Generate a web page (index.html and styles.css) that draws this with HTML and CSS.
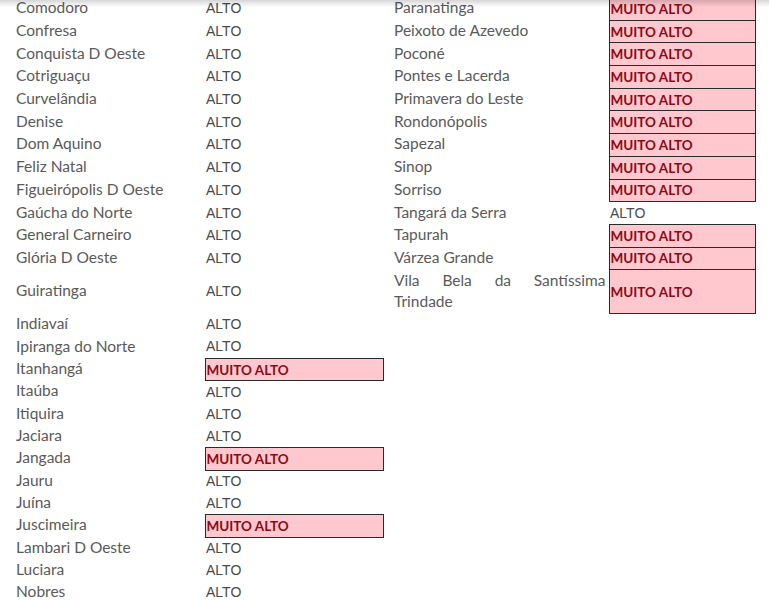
FILE: index.html
```html
<!DOCTYPE html>
<html lang="pt-BR">
<head>
<meta charset="utf-8">
<title>Municípios</title>
<link rel="stylesheet" href="styles.css">
</head>
<body>
<div class="shade"></div>
<table class="grid">
<colgroup><col class="w1"><col class="w2"><col class="w3"><col class="w4"></colgroup>
<tbody class="upper">
<tr><td class="name">Comodoro</td><td class="val">ALTO</td><td class="name r">Paranatinga</td><td class="val hi">MUITO ALTO</td></tr>
<tr><td class="name">Confresa</td><td class="val">ALTO</td><td class="name r">Peixoto de Azevedo</td><td class="val hi">MUITO ALTO</td></tr>
<tr><td class="name">Conquista D Oeste</td><td class="val">ALTO</td><td class="name r">Poconé</td><td class="val hi">MUITO ALTO</td></tr>
<tr><td class="name">Cotriguaçu</td><td class="val">ALTO</td><td class="name r">Pontes e Lacerda</td><td class="val hi">MUITO ALTO</td></tr>
<tr><td class="name">Curvelândia</td><td class="val">ALTO</td><td class="name r">Primavera do Leste</td><td class="val hi">MUITO ALTO</td></tr>
<tr><td class="name">Denise</td><td class="val">ALTO</td><td class="name r">Rondonópolis</td><td class="val hi">MUITO ALTO</td></tr>
<tr><td class="name">Dom Aquino</td><td class="val">ALTO</td><td class="name r">Sapezal</td><td class="val hi">MUITO ALTO</td></tr>
<tr><td class="name">Feliz Natal</td><td class="val">ALTO</td><td class="name r">Sinop</td><td class="val hi">MUITO ALTO</td></tr>
<tr><td class="name">Figueirópolis D Oeste</td><td class="val">ALTO</td><td class="name r">Sorriso</td><td class="val hi">MUITO ALTO</td></tr>
<tr><td class="name">Gaúcha do Norte</td><td class="val">ALTO</td><td class="name r">Tangará da Serra</td><td class="val">ALTO</td></tr>
<tr><td class="name">General Carneiro</td><td class="val">ALTO</td><td class="name r">Tapurah</td><td class="val hi">MUITO ALTO</td></tr>
<tr><td class="name">Glória D Oeste</td><td class="val">ALTO</td><td class="name r">Várzea Grande</td><td class="val hi">MUITO ALTO</td></tr>
<tr class="tall"><td class="name">Guiratinga</td><td class="val">ALTO</td><td class="name r just">Vila Bela da Santíssima Trindade</td><td class="val hi">MUITO ALTO</td></tr>
</tbody>
<tbody class="lower">
<tr><td class="name">Indiavaí</td><td class="val">ALTO</td><td></td><td></td></tr>
<tr><td class="name">Ipiranga do Norte</td><td class="val">ALTO</td><td></td><td></td></tr>
<tr><td class="name">Itanhangá</td><td class="val hi">MUITO ALTO</td><td></td><td></td></tr>
<tr><td class="name">Itaúba</td><td class="val">ALTO</td><td></td><td></td></tr>
<tr><td class="name">Itiquira</td><td class="val">ALTO</td><td></td><td></td></tr>
<tr><td class="name">Jaciara</td><td class="val">ALTO</td><td></td><td></td></tr>
<tr><td class="name">Jangada</td><td class="val hi">MUITO ALTO</td><td></td><td></td></tr>
<tr><td class="name">Jauru</td><td class="val">ALTO</td><td></td><td></td></tr>
<tr><td class="name">Juína</td><td class="val">ALTO</td><td></td><td></td></tr>
<tr><td class="name">Juscimeira</td><td class="val hi">MUITO ALTO</td><td></td><td></td></tr>
<tr><td class="name">Lambari D Oeste</td><td class="val">ALTO</td><td></td><td></td></tr>
<tr><td class="name">Luciara</td><td class="val">ALTO</td><td></td><td></td></tr>
<tr><td class="name">Nobres</td><td class="val">ALTO</td><td></td><td></td></tr>
</tbody>
</table>
</body>
</html>
```
FILE: styles.css
```css
html, body {
  margin: 0;
  padding: 0;
  background: #ffffff;
  overflow: hidden;
}
.shade {
  position: fixed;
  top: 0;
  left: 0;
  right: 0;
  height: 7px;
  background: linear-gradient(to bottom, rgba(0,0,0,0.16), rgba(0,0,0,0));
  z-index: 2;
  pointer-events: none;
}
.grid {
  border-collapse: collapse;
  table-layout: fixed;
  width: 755px;
  margin-top: -3px;
}
.w1 { width: 205px; }
.w2 { width: 178px; }
.w3 { width: 226px; }
.w4 { width: 146px; }
.upper tr { height: 22.7px; }
.lower tr { height: 22.33px; }
.upper tr.tall { height: 44px; }
.grid td {
  padding: 0;
  vertical-align: middle;
  white-space: nowrap;
}
.name {
  font-family: Lato, "Liberation Sans", sans-serif;
  font-size: 15.5px;
  color: #5a5a5a;
  padding-left: 16px !important;
  padding-bottom: 3px !important;
}
.name.r {
  padding-left: 11px !important;
  padding-right: 3px !important;
}
.name.just {
  white-space: normal !important;
  text-align: justify;
  line-height: 21.5px;
  padding-bottom: 1px !important;
}
.val {
  font-family: "Liberation Sans", Arial, sans-serif;
  font-size: 14px;
  color: #4a4a4a;
  padding-left: 1px !important;
  padding-bottom: 1px !important;
}
.val.hi {
  font-family: Lato, "Liberation Sans", sans-serif;
  font-weight: 700;
  font-size: 13.5px;
  color: #8c0a14;
  background: #ffc7ce;
  border: 1px solid #2a2a2a;
  padding-left: 1px !important;
  padding-bottom: 0 !important;
}
```
